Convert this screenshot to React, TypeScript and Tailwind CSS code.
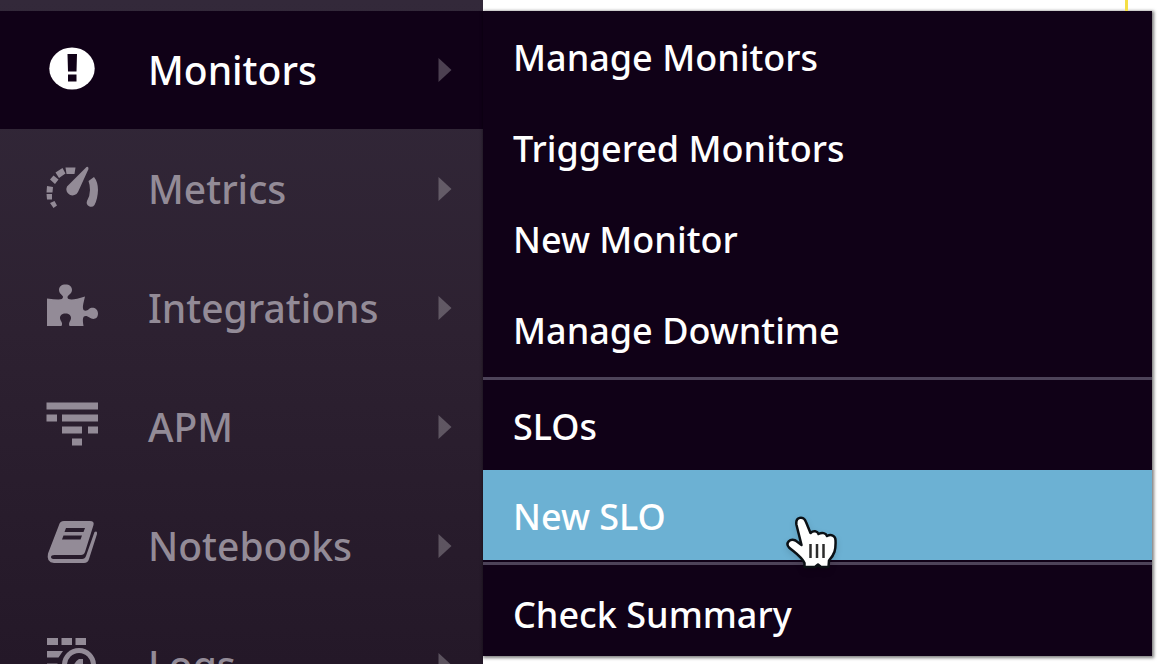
import type { ReactNode } from 'react';

function MonitorIcon() {
  return (
    <svg viewBox="0 0 54 54" className="size-[54px]" aria-hidden="true">
      <ellipse cx="27" cy="25.500" rx="22.700" ry="21" fill="currentColor" />
      <path d="M22.500 11h9.500l-.5 17.500h-8.500zM23 31.500h8.500v7H23z" fill="#100117" />
    </svg>
  );
}

function MetricsIcon() {
  return (
    <svg viewBox="0 0 54 54" className="size-[54px]" aria-hidden="true">
      <path
        fill="currentColor"
        d="M41.500 5Q43.500 4 43.500 7L33 30a6 6 0 0 1-11-5.500zM20.500 5.500h10l-1 6.500h-8zM10.500 10.500l7-4.500 3 5.500-6.500 4.500zM5 17.500l3.500-4 5 4-3.500 4.500zM2 24l6 1-.5 5.500H1.500zM1.500 32H7v5.500H2zM5 41l4.500-2 2.500 4.500-3.500 2.500z"
      />
      <path fill="currentColor" d="M43.500 19l5.500-4q4 5 4 13-.3 9-3.500 15a4.300 4.300 0 0 1-7.500-4q3-5.500 3-11 0-5-1.500-9z" />
    </svg>
  );
}

function PuzzleIcon() {
  return (
    <svg viewBox="0 0 54 54" className="size-[54px]" aria-hidden="true">
      <path
        fill="currentColor"
        d="M2 17.500q7 1 11.500 1 4.500 0 4.500-2.500c0-2-4-3-4-7C14 5.500 16.500 3.500 20.500 3.500S27 5.500 27 9c0 4-4.500 5-4.500 7.500 0 2.500 6 3 17.500-1-1.500 6-2.500 10-2 12 .5 3 4 2.500 6 .5 2.500-2.500 9-1.500 9 4.500s-5.500 6.500-8.500 4c-2.500-2-6-2.500-6.500 1-.3 2 0 4 .5 7.500H24.500c-1.500-3.500 1.500-5 1.500-8 0-2.500-2-4.500-5.500-4.500S15 34.500 15 37c0 3 3.500 4.500 1.500 8H2z"
      />
    </svg>
  );
}

function ApmIcon() {
  return (
    <svg viewBox="0 0 54 54" className="size-[54px]" aria-hidden="true">
      <path fill="currentColor" d="M1.500 2.500h51.500v7H1.500zM1.500 14.500h10.500v7H1.500zM17 14.500h36v7H17zM17 26.500h20v7H17zM43 26.500h10v7H43zM27 38.500h10v7H27z" />
    </svg>
  );
}

function NotebookIcon() {
  return (
    <svg viewBox="0 0 54 54" className="size-[54px]" aria-hidden="true">
      <path
        fill="currentColor"
        fillRule="evenodd"
        d="M19 2h26q4.500 0 3.500 4l-8.500 27q-1 3-4 3H9.500Q6 36 6 38t3.500 2H37q3 0 4-3l8.500-24q3-1.500 2.500 2L44 40q-1 4-5 4H9Q1 43.500 3 34.500L14 6q1-4 5-4zM21 9l-1.500 4h19l1.500-4zM18.500 16.500l-1.500 4h18.500l1.500-4z"
      />
    </svg>
  );
}

function LogsIcon() {
  return (
    <svg viewBox="0 0 54 54" className="size-[54px]" aria-hidden="true">
      <path fill="currentColor" d="M2 0h11v7H2zM16.500 0h10.500v7H16.500zM30.500 0h10.500v7H30.500zM2 13h16l-4.500 6.500H2zM2 25.500h10.500V32H2zM2 38h15l5 6.500H2z" />
      <circle cx="34" cy="27" r="14.500" fill="none" stroke="currentColor" strokeWidth="5" />
      <path fill="currentColor" d="M34 21h4v7a7 7 0 1 1-10 2q1-6 6-9zM43 39l5-4 7 8-5 4z" />
    </svg>
  );
}

function Caret() {
  return (
    <svg viewBox="0 0 14 24" className="h-6 w-[14px] text-white/25" aria-hidden="true">
      <path d="M0.500 0v24l13-12z" fill="currentColor" />
    </svg>
  );
}

const sections: { label: string; icon: ReactNode; active?: boolean }[] = [
  { label: 'Monitors', icon: <MonitorIcon />, active: true },
  { label: 'Metrics', icon: <MetricsIcon /> },
  { label: 'Integrations', icon: <PuzzleIcon /> },
  { label: 'APM', icon: <ApmIcon /> },
  { label: 'Notebooks', icon: <NotebookIcon /> },
  { label: 'Logs', icon: <LogsIcon /> },
];

const groups = [
  { labels: ['Manage Monitors', 'Triggered Monitors', 'New Monitor', 'Manage Downtime'], item: 'h-[91px] pt-[2px]' },
  { labels: ['SLOs', 'New SLO'], item: 'h-[90px] pt-1' },
  { labels: ['Check Summary'], item: 'h-[91px] pt-2' },
];

function HandCursor() {
  return (
    <svg viewBox="0 0 54 56" className="pointer-events-none absolute top-[43px] left-[301px] z-10 h-14 w-[54px] overflow-visible drop-shadow-md" aria-hidden="true">
      <path
        d="M20.500 54v-4C17 43 10 39 5 34.500c-4-4.500 1-9.500 6.500-7l6 4.500L12.500 12c-1.500-8 7-10 9.500-3L26.500 20c3-3 7-2 8 1 3.500-2 7.500-1 8.500 2 4-2 8.500-.5 8.500 4 .5 10-1 14.500-6.500 20.500l-.5 6.500h-7.500l-3-2.500-3 2.500z"
        fill="#fff"
        stroke="#0b1015"
        strokeWidth="2.500"
        strokeLinejoin="round"
      />
      <path d="M26.500 31v14M33 31v14M39.500 31v14" stroke="#2c2c2c" strokeWidth="2.500" />
    </svg>
  );
}

export default function App() {
  return (
    <div className="flex h-screen overflow-hidden bg-white font-['Noto_Sans',sans-serif] leading-[52px] font-medium">
      <nav aria-label="Main" className="w-[483px] shrink-0 bg-linear-to-b from-[#33293a] via-[#2d2131] to-[#241828] pt-[11px] text-[39px]">
        <ul>
          {sections.map((s) => (
            <li key={s.label}>
              <a
                href="#"
                className={`flex items-center pr-[31px] pl-[45px] ${s.active ? 'h-[118px] bg-[#100117] text-white' : 'h-[119px] text-[#938b97]'}`}
              >
                {s.icon}
                <span className="ml-[49px] flex-1">{s.label}</span>
                <Caret />
              </a>
            </li>
          ))}
        </ul>
      </nav>
      <div className="min-w-0 flex-1 pt-[11px] pr-2 text-[36px]">
        <div className="relative">
          <span className="absolute right-[24px] bottom-full h-[11px] w-[3px] bg-[#f5df45]" />
          <ul className="bg-[#100117] text-white shadow-[1px_1px_3px_1px_rgba(0,0,0,0.5)]">
            {groups.map((g, i) => (
              <li key={g.labels[0]} className={i > 0 ? 'pt-[2px]' : ''}>
                <ul className={i > 0 ? 'border-t-[3px] border-[#4d4359]' : ''}>
                  {g.labels.map((label) => (
                    <li key={label} className="relative">
                      <a href="#" className={`flex items-center pl-[30px] ${g.item} ${label === 'New SLO' ? 'bg-[#6cb1d3]' : ''}`}>
                        {label}
                      </a>
                      {label === 'New SLO' && <HandCursor />}
                    </li>
                  ))}
                </ul>
              </li>
            ))}
          </ul>
        </div>
      </div>
    </div>
  );
}
